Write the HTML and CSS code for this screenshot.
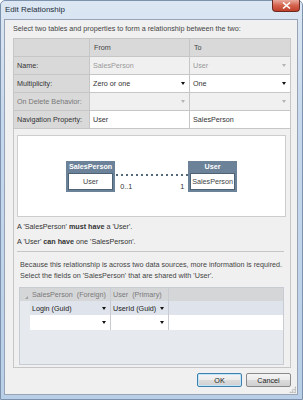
FILE: index.html
```html
<!DOCTYPE html>
<html lang="en">
<head>
<meta charset="UTF-8">
<title>Edit Relationship</title>
<link rel="stylesheet" href="styles.css">
</head>
<body>

<div class="window">
  <div class="titlebar">
    <span class="title">Edit Relationship</span>
    <span class="close">
      <svg width="9" height="7" viewBox="0 0 9 7"><path d="M1 0.5 L8 6.5 M8 0.5 L1 6.5" stroke="#fff" stroke-width="1.6"/></svg>
    </span>
  </div>

  <div class="client">
    <p class="intro">Select two tables and properties to form a relationship between the two:</p>

    <div class="panel">
      <div class="props">
        <div class="cell head"></div>
        <div class="cell head">From</div>
        <div class="cell head">To</div>

        <div class="cell label">Name:</div>
        <div class="cell off">SalesPerson</div>
        <div class="cell off">User <span class="arrow light"></span></div>

        <div class="cell label">Multiplicity:</div>
        <div class="cell">Zero or one <span class="arrow"></span></div>
        <div class="cell">One <span class="arrow"></span></div>

        <div class="cell label dim">On Delete Behavior:</div>
        <div class="cell off"><span class="arrow light"></span></div>
        <div class="cell off"><span class="arrow light"></span></div>

        <div class="cell label">Navigation Property:</div>
        <div class="cell">User</div>
        <div class="cell">SalesPerson</div>
      </div>

      <div class="lower">
        <div class="diagram">
          <div class="entity">
            <div class="entity-name">SalesPerson</div>
            <div class="entity-field">User</div>
          </div>
          <div class="link">
            <div class="dots"></div>
            <div class="ends"><span>0..1</span><span>1</span></div>
          </div>
          <div class="entity">
            <div class="entity-name">User</div>
            <div class="entity-field">SalesPerson</div>
          </div>
        </div>

        <p class="rule">A 'SalesPerson' <b>must have</b> a 'User'.</p>
        <p class="rule">A 'User' <b>can have</b> one 'SalesPerson'.</p>

        <div class="sep"></div>

        <p class="note">Because this relationship is across two data sources, more information is required.</p>
        <p class="note">Select the fields on 'SalesPerson' that are shared with 'User'.</p>

        <div class="fields">
          <div class="frow fhead">
            <div class="fsel"><span class="corner"></span></div>
            <div class="fcol c1">SalesPerson&nbsp; (Foreign)</div>
            <div class="fcol c2">User&nbsp; (Primary)</div>
            <div class="fcol c3"></div>
          </div>
          <div class="frow sel">
            <div class="fsel"></div>
            <div class="fcol c1">Login (Guid) <span class="arrow"></span></div>
            <div class="fcol c2">UserId (Guid) <span class="arrow"></span></div>
            <div class="fcol c3"></div>
          </div>
          <div class="frow blank">
            <div class="fsel"></div>
            <div class="fcol c1"><span class="arrow"></span></div>
            <div class="fcol c2"><span class="arrow"></span></div>
            <div class="fcol c3"></div>
          </div>
        </div>
      </div>
    </div>

    <div class="buttons">
      <button class="btn default">OK</button>
      <button class="btn">Cancel</button>
    </div>
    <span class="grip"></span>
  </div>
</div>

</body>
</html>
```

FILE: styles.css
```css
* {
  box-sizing: border-box;
}
body {
  margin: 0;
  font-family: "Liberation Sans", Arial, sans-serif;
  font-size: 7.2px;
  color: #333;
}
p {
  margin: 0;
  white-space: nowrap;
}
.window {
  width: 303px;
  height: 400px;
  display: flex;
  flex-direction: column;
  background: linear-gradient(to bottom, #dce7f3, #c6d8ed 30%, #b9cfe8);
  border: 1px solid #7d93ad;
  border-radius: 5px 5px 0 0;
  padding: 0 4px 4px 3px;
}
.titlebar {
  height: 18px;
  display: flex;
  align-items: center;
  justify-content: space-between;
  flex: none;
}
.title {
  font-size: 8px;
  color: #1e2e40;
  padding-left: 1px;
  margin-top: -2px;
}
.close {
  align-self: flex-start;
  width: 28px;
  height: 12px;
  margin-top: -1px;
  margin-right: -2px;
  display: flex;
  align-items: center;
  justify-content: center;
  background: linear-gradient(to bottom, #e9a99c, #d4634e 50%, #c1402a);
  border: 1px solid #6e2a20;
  border-top: none;
  border-radius: 0 0 4px 4px;
}
.client {
  flex: 1;
  position: relative;
  background: #f0f0f0;
  border: 1px solid #97a4b5;
  padding: 4px 6px 0 8px;
}
.intro {
  line-height: 10px;
  height: 10px;
  margin-bottom: 4px;
  color: #444;
}

/* property table */
.panel {
  border: 1px solid #c6c6c6;
  height: 330px;
  display: flex;
  flex-direction: column;
}
.props {
  display: grid;
  grid-template-columns: 76px 100px 1fr;
  grid-auto-rows: 18px;
}
.cell {
  display: flex;
  align-items: center;
  justify-content: space-between;
  padding: 0 4px 0 3px;
  background: #fff;
  border-right: 1px solid #c6c6c6;
  border-bottom: 1px solid #c6c6c6;
}
.cell:nth-child(3n) {
  border-right: none;
}
.cell.head {
  background: #d9d9d9;
  color: #444;
  padding-left: 4px;
}
.cell.label {
  background: #d9d9d9;
  padding-left: 3px;
}
.cell.dim {
  color: #777;
}
.cell.off {
  background: #f0f0f0;
  color: #999;
}
.arrow {
  margin-left: auto;
  width: 0;
  height: 0;
  border-left: 2.5px solid transparent;
  border-right: 2.5px solid transparent;
  border-top: 3px solid #111;
}
.arrow.light {
  border-top-color: #b4b4b4;
}

/* lower area */
.lower {
  flex: 1;
  padding: 6px 4px 0 3px;
}
.diagram {
  height: 82px;
  background: #fff;
  border: 1px solid #cdcdcd;
  display: flex;
  align-items: center;
  justify-content: center;
  padding-top: 1px;
}
.entity {
  background: #6b8299;
  padding: 0 2px 2px;
  color: #444;
}
.entity-name {
  height: 12px;
  line-height: 12px;
  text-align: center;
  color: #fff;
  font-weight: bold;
  padding: 0 1px;
}
.entity-field {
  background: #fff;
  height: 17px;
  line-height: 16px;
  text-align: center;
  border: 1px solid #4e6276;
  padding: 0 1px;
}
.link {
  width: 73px;
  height: 32px;
  padding-top: 13px;
}
.dots {
  height: 2px;
  background-image: linear-gradient(to right, #55687c 2px, transparent 2px);
  background-size: 5px 2px;
  background-position: 1px 0;
}
.ends {
  display: flex;
  justify-content: space-between;
  padding: 6px 4px 0 5px;
  color: #333;
}
.rule {
  line-height: 10px;
  margin-top: 5px;
}
.rule + .rule {
  margin-top: 5px;
}
.sep {
  height: 1px;
  background: #c6c6c6;
  margin: 4px 2px 7px 0;
}
.note {
  line-height: 11px;
  padding-left: 3px;
  color: #444;
}

/* key field grid */
.fields {
  margin: 6px 2px 0 2px;
  height: 78px;
  background: #e6e9ee;
  border: 1px solid #c8ccd2;
}
.frow {
  display: flex;
  height: 14px;
}
.frow.fhead {
  height: 13px;
  background: #d5d6d8;
  color: #7a7a7a;
}
.frow.sel {
  background: #dfe4ec;
}
.frow.blank {
  background: #fff;
  height: 15px;
}
.fsel {
  width: 10px;
  flex: none;
  background: #e6e9ee;
  position: relative;
}
.fhead .fsel {
  background: #d5d6d8;
}
.corner {
  position: absolute;
  right: 2px;
  bottom: 2px;
  width: 0;
  height: 0;
  border-left: 3px solid transparent;
  border-bottom: 3px solid #a0a0a0;
}
.fcol {
  display: flex;
  align-items: center;
  padding: 0 4px 0 2px;
  border-right: 1px solid #c8ccd2;
}
.fcol.c1 {
  width: 81px;
}
.fcol.c2 {
  width: 58px;
}
.fcol.c3 {
  flex: 1;
  border-right: none;
}
.sel .fcol,
.blank .fcol {
  color: #222;
}

/* buttons */
.buttons {
  display: flex;
  justify-content: flex-end;
  gap: 4px;
  margin-top: 5px;
  padding-right: 0;
}
.btn {
  width: 45px;
  height: 14px;
  padding: 0;
  font-family: "Liberation Sans", Arial, sans-serif;
  font-size: 7.2px;
  color: #222;
  background: linear-gradient(to bottom, #f4f4f4, #ebebeb 50%, #dcdcdc 51%, #d0d0d0);
  border: 1px solid #8a8a8a;
  border-radius: 2px;
}
.btn.default {
  border-color: #3c7fb1;
  box-shadow: inset 0 0 0 1px #c4e5f6;
}
.grip {
  position: absolute;
  right: 1px;
  bottom: 1px;
  width: 7px;
  height: 7px;
  background-image: radial-gradient(circle, #b0b0b0 0.8px, transparent 1px);
  background-size: 2.5px 2.5px;
  clip-path: polygon(100% 0, 100% 100%, 0 100%);
}
```
